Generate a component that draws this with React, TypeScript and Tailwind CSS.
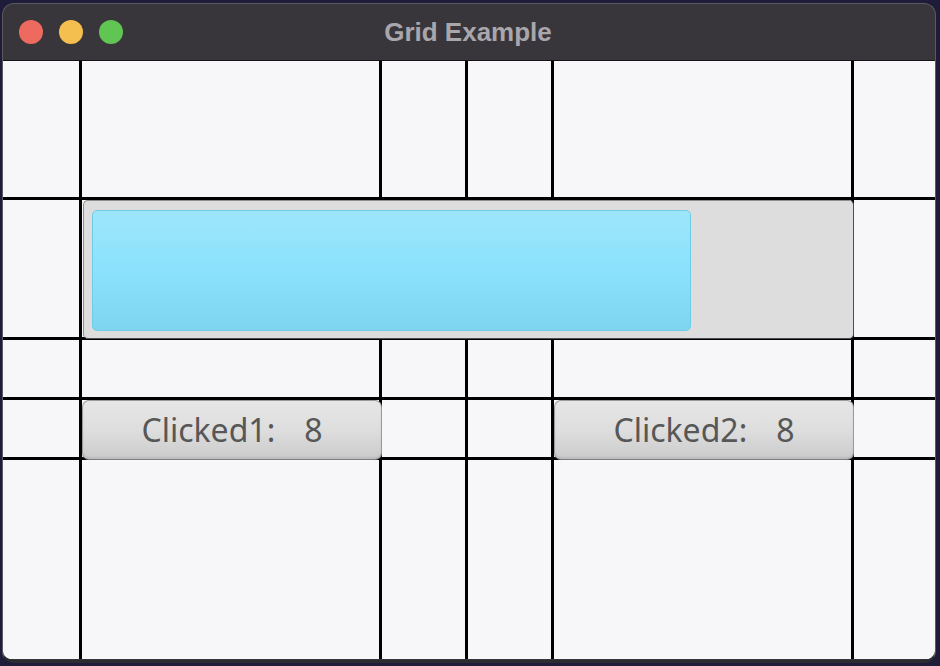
import React from "react";

const Cell = ({ children, className = "" }: { children?: React.ReactNode; className?: string }) => (
  <div className={`bg-[#f7f7f9] ${className}`}>{children}</div>
);

const GridButton = ({ label, value }: { label: string; value: string }) => (
  <Cell className="relative">
    <div
      className="w-[300px] h-[60px] rounded-[7px] border border-[#9a9a9a] border-b-[#7e7e7e] bg-gradient-to-b from-[#e6e6e6] via-[#dedede] to-[#cbcbcb] flex items-center justify-center text-[#575757] shadow-[inset_0_-2px_2px_rgba(0,0,0,0.08)]"
      style={{ fontFamily: '"Noto Sans", "Open Sans", sans-serif', fontSize: "32px" }}
    >
      <span>{label}</span>
      <span className="ml-[29px]">{value}</span>
    </div>
  </Cell>
);

export default function App() {
  return (
    <div className="w-[940px] h-[666px] bg-[#1e1c39] pt-[3px] pl-[2px] overflow-hidden">
      <div className="w-[934px] h-[660px] rounded-[12px] border border-[#5b595f] border-b-[3px] border-b-[#2c2b30] bg-[#39363b] overflow-hidden flex flex-col">
        <div className="h-[57px] border-b border-[#141316] flex items-center relative shrink-0">
          <div className="flex items-center gap-[16px] pl-[16px]">
            <div className="w-[24px] h-[24px] rounded-full bg-[#ee6a5f]" />
            <div className="w-[24px] h-[24px] rounded-full bg-[#f5bf4f]" />
            <div className="w-[24px] h-[24px] rounded-full bg-[#61c554]" />
          </div>
          <div
            className="absolute inset-0 flex items-center justify-center text-[#a9a6ac] font-bold text-[26px] pr-[2px]"
            style={{ fontFamily: '"Liberation Sans", Arial, sans-serif' }}
          >
            Grid Example
          </div>
        </div>
        <div className="grid grid-cols-[76px_297px_83px_83px_297px_81px] grid-rows-[136px_137px_57px_57px_199px] gap-[3px] bg-black">
          {/* row 1 */}
          <Cell />
          <Cell />
          <Cell />
          <Cell />
          <Cell />
          <Cell />
          {/* row 2 */}
          <Cell />
          <Cell className="col-span-4 relative">
            <div className="ml-[1px] w-[771px] h-[139px] rounded-[5px] bg-[#dddddd] border border-[#8e8e8e] border-r-[#4e4e4e] border-b-[#4e4e4e] pl-[8px] pt-[9px]">
              <div className="w-[599px] h-[121px] rounded-[5px] border border-[#6fcbe6] bg-gradient-to-b from-[#9de6fa] via-[#8ae2fd] to-[#7ed5ef]" />
            </div>
          </Cell>
          <Cell />
          {/* row 3 */}
          <Cell />
          <Cell />
          <Cell />
          <Cell />
          <Cell />
          <Cell />
          {/* row 4 */}
          <Cell />
          <GridButton label="Clicked1:" value="8" />
          <Cell />
          <Cell />
          <GridButton label="Clicked2:" value="8" />
          <Cell />
          {/* row 5 */}
          <Cell />
          <Cell />
          <Cell />
          <Cell />
          <Cell />
          <Cell />
        </div>
      </div>
    </div>
  );
}
